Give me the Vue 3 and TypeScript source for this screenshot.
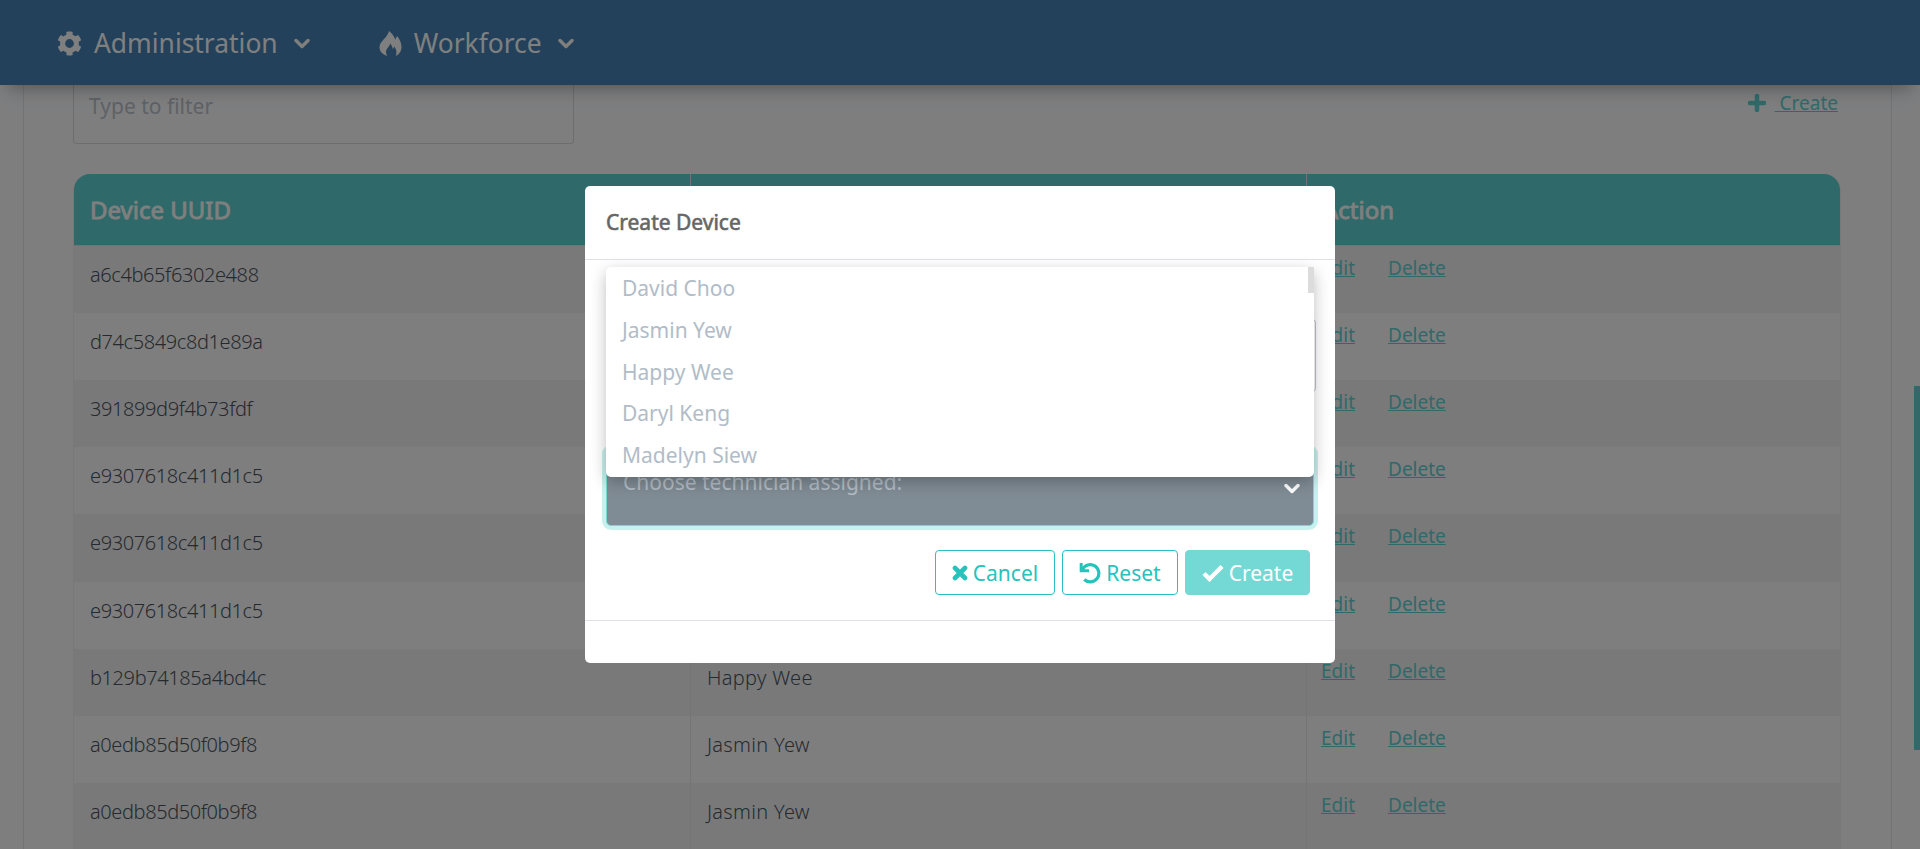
<script setup lang="ts">
interface DeviceRow {
  uuid: string
  technician: string
}

const rows: DeviceRow[] = [
  { uuid: 'a6c4b65f6302e488', technician: 'David Choo' },
  { uuid: 'd74c5849c8d1e89a', technician: 'Jasmin Yew' },
  { uuid: '391899d9f4b73fdf', technician: 'Happy Wee' },
  { uuid: 'e9307618c411d1c5', technician: 'Daryl Keng' },
  { uuid: 'e9307618c411d1c5', technician: 'Daryl Keng' },
  { uuid: 'e9307618c411d1c5', technician: 'Daryl Keng' },
  { uuid: 'b129b74185a4bd4c', technician: 'Happy Wee' },
  { uuid: 'a0edb85d50f0b9f8', technician: 'Jasmin Yew' },
  { uuid: 'a0edb85d50f0b9f8', technician: 'Jasmin Yew' },
]

const technicians: string[] = ['David Choo', 'Jasmin Yew', 'Happy Wee', 'Daryl Keng', 'Madelyn Siew']
</script>

<template>
  <div class="app">
    <header class="navbar">
      <div class="nav-item">
        <svg class="nav-icon cog" viewBox="0 0 512 512"><path d="M487.400 315.700l-42.600-24.600c4.300-23.200 4.300-47 0-70.200l42.600-24.600c4.900-2.800 7.100-8.600 5.500-14-11.100-35.600-30-67.800-54.700-94.600-3.800-4.100-10-5.100-14.800-2.300L380.800 110c-17.900-15.400-38.500-27.300-60.800-35.100V25.800c0-5.600-3.900-10.500-9.400-11.700-36.700-8.200-74.300-7.800-109.200 0-5.500 1.200-9.400 6.100-9.400 11.700V75c-22.200 7.900-42.800 19.800-60.800 35.100L88.700 85.500c-4.900-2.800-11-1.900-14.800 2.300-24.700 26.700-43.600 58.900-54.700 94.600-1.700 5.400.6 11.200 5.500 14L67.300 221c-4.300 23.200-4.300 47 0 70.200l-42.600 24.600c-4.900 2.800-7.100 8.600-5.500 14 11.100 35.600 30 67.800 54.700 94.600 3.800 4.100 10 5.100 14.800 2.300l42.600-24.600c17.900 15.400 38.500 27.300 60.800 35.100v49.200c0 5.600 3.900 10.500 9.400 11.700 36.700 8.200 74.300 7.800 109.200 0 5.500-1.200 9.400-6.100 9.400-11.700v-49.200c22.200-7.900 42.800-19.800 60.800-35.100l42.600 24.600c4.900 2.800 11 1.900 14.800-2.300 24.700-26.700 43.600-58.900 54.700-94.600 1.500-5.500-.7-11.300-5.600-14.100zM256 346a90 90 0 1 1 0-180 90 90 0 1 1 0 180z"/></svg>
        <span class="nav-label">Administration</span>
        <svg class="nav-caret" viewBox="0 0 16 12"><path d="M2 2.500l6 6 6-6"/></svg>
      </div>
      <div class="nav-item">
        <svg class="nav-icon fire" viewBox="0 0 22 25"><path d="M9.500 0c3.200 2.400 5.300 5.300 6.300 8.700.5-1.400 1-2.500 1.900-3.600C20.500 8.500 22 12.500 22 16c0 4-2.300 7.200-5.700 9 1.200-3.400.8-6.400-1.600-9.400l-1.300 2.600c-.5-2.400-1.400-4.200-2.700-5.600-.7 3.200-4.200 5.100-4.200 8.400 0 1.500.4 2.800 1.200 4C2.800 23.300 0 20.300 0 16.200 0 10.200 8.300 6.500 9.500 0z"/></svg>
        <span class="nav-label">Workforce</span>
        <svg class="nav-caret" viewBox="0 0 16 12"><path d="M2 2.500l6 6 6-6"/></svg>
      </div>
    </header>

    <main class="page">
      <section class="panel">
        <div class="toolbar">
          <div class="filter">Type to filter</div>
          <a class="create-link">
            <svg class="plus" viewBox="0 0 18 18"><path d="M9 2v14M2 9h14"/></svg>
            <span>&nbsp;Create</span>
          </a>
        </div>
        <div class="table">
          <div class="tr head">
            <div class="th">Device UUID</div>
            <div class="th">Technician</div>
            <div class="th">Action</div>
          </div>
          <div v-for="(row, i) in rows" :key="i" class="tr">
            <div class="td uuid">{{ row.uuid }}</div>
            <div class="td name">{{ row.technician }}</div>
            <div class="td actions"><a>Edit</a><a>Delete</a></div>
          </div>
        </div>
      </section>
      <div class="page-thumb"></div>
    </main>

    <div class="backdrop">
      <div class="modal">
        <div class="modal-header">Create Device</div>
        <div class="modal-body">
          <div class="field text-field"></div>
          <div class="field select">
            <span>Choose technician assigned:</span>
            <svg class="select-caret" viewBox="0 0 16 12"><path d="M2 2.500l6 6 6-6"/></svg>
            <div class="menu">
              <div class="options">
                <div v-for="name in technicians" :key="name" class="option">{{ name }}</div>
              </div>
              <div class="menu-thumb"></div>
            </div>
          </div>
          <div class="buttons">
            <button class="btn cancel">
              <svg width="16" height="16" viewBox="0 0 16 16"><path d="M3 3l10 10M13 3L3 13" stroke-width="4.600" stroke-linecap="round"/></svg>Cancel
            </button>
            <button class="btn reset">
              <svg width="22" height="22" viewBox="0 0 22 22"><path d="M3.500 7.500A8.600 8.600 0 1 1 5.300 17.500" stroke-width="3.200"/><path d="M2.200 1v7.700h7.800" stroke-width="3"/></svg>Reset
            </button>
            <button class="btn create">
              <svg width="22" height="18" viewBox="0 0 22 18"><path d="M2 9.500l5.500 5.500L20 2.500" stroke-width="4.400"/></svg>Create
            </button>
          </div>
        </div>
        <div class="modal-footer"></div>
      </div>
    </div>
  </div>
</template>

<style>
body {
  margin: 0;
  overflow: hidden;
}
</style>

<style scoped>
.app {
  position: relative;
  height: 849px;
  overflow: hidden;
  background: #fcfdff;
  font-family: "Noto Sans", sans-serif;
  color: #4c555e;
  display: flex;
  flex-direction: column;
}
.app * {
  box-sizing: border-box;
}
.navbar {
  position: relative;
  z-index: 1;
  flex: none;
  height: 85px;
  background: #4682b4;
  box-shadow: 0 10px 18px -8px rgba(0, 0, 0, 0.36);
  display: flex;
  align-items: center;
  padding-left: 57px;
  gap: 69px;
  color: #fff;
}
.nav-item {
  display: flex;
  align-items: center;
  font-size: 26.4px;
}
.nav-icon {
  fill: #fff;
  width: 25px;
  height: 25px;
  margin-top: 2px;
}
.nav-icon.fire {
  width: 23px;
}
.nav-label {
  margin: 0 16px 0 12px;
}
.nav-caret,
.select-caret {
  width: 16px;
  height: 12px;
  fill: none;
  stroke: #fff;
  stroke-width: 3.400;
  stroke-linecap: round;
  stroke-linejoin: round;
}
.nav-caret {
  margin-top: 3px;
}
.page {
  flex: none;
  height: 764px;
  display: flex;
  padding: 0 0 0 23px;
}
.panel {
  width: 1869px;
  border: solid #e6e7e9;
  border-width: 0 1px;
  padding: 0 50px 0 49px;
}
.toolbar {
  display: flex;
  justify-content: space-between;
  height: 89px;
}
.filter {
  width: 501px;
  height: 59px;
  border: 1px solid #dadbdd;
  border-top: 0;
  border-radius: 0 0 4px 4px;
  padding: 6px 15px;
  font-size: 21px;
  line-height: 30px;
  color: #bcc4cc;
}
.create-link {
  display: flex;
  height: 36px;
  align-items: center;
  gap: 9px;
  padding-right: 3px;
  font-size: 19px;
  color: #61d3d2;
}
.create-link span {
  text-decoration: underline;
}
.plus {
  width: 18px;
  height: 18px;
  stroke: #61d3d2;
  stroke-width: 4.500;
  stroke-linecap: round;
}
.table {
  border: solid #f0f1f2;
  border-width: 0 1px;
  border-radius: 17px 17px 0 0;
}
.tr {
  display: grid;
  grid-template-columns: 616px 616px 1fr;
  height: 67.2px;
}
.tr:nth-child(even) {
  background: #f2f3f5;
}
.tr.head {
  height: 71.600px;
  background: #61d3d2;
  border-radius: 16px 16px 0 0;
  border-bottom: 1px solid #e4e6e8;
}
.th {
  padding: 18px 16px 0;
  font-size: 24px;
  line-height: 36px;
  color: #fff;
  -webkit-text-stroke: 0.8px #fff;
}
.th + .th {
  border-left: 1px solid #dfe6e8;
}
.td {
  padding: 14px 16px 0;
  font-size: 20px;
  line-height: 30px;
  font-weight: 300;
}
.td.uuid {
  letter-spacing: -0.4px;
}
.td.name {
  letter-spacing: 0.3px;
}
.td + .td {
  border-left: 1px solid #e9eaec;
}
.td.actions {
  display: flex;
  gap: 33px;
  padding: 8px 14px;
  line-height: 28px;
  font-size: 19px;
  font-weight: 400;
  color: #61d3d2;
  text-decoration: underline;
}
.page-thumb {
  width: 6px;
  height: 364px;
  margin: 301px 0 0 auto;
  background: #61d3d2;
}
.backdrop {
  position: absolute;
  z-index: 2;
  inset: 0;
  background: rgba(0, 0, 0, 0.5);
  display: flex;
  justify-content: center;
  align-items: flex-start;
  padding-top: 186px;
}
.modal {
  width: 750px;
  height: 477px;
  background: #fff;
  border-radius: 5px;
  display: flex;
  flex-direction: column;
}
.modal-header {
  height: 74px;
  border-bottom: 1px solid #dee2e6;
  padding: 20px 21px;
  font-size: 21px;
  line-height: 32px;
  color: #666;
  -webkit-text-stroke: 0.6px #666;
}
.modal-body {
  flex: 1;
  padding: 58px 19px 0 21px;
}
.field {
  height: 75px;
  border: 1px solid #bfc2ca;
  border-radius: 5px;
}
.select {
  position: relative;
  width: 708px;
  height: 77px;
  margin-top: 56px;
  border-color: #74d9d4;
  background: #808c95;
  box-shadow: 0 0 0 4px #c8f0ee;
  padding: 16px;
  font-size: 21px;
  line-height: 32px;
  color: #b4bdc6;
}
.select-caret {
  position: absolute;
  right: 13px;
  top: 33px;
}
.menu {
  position: absolute;
  left: -1px;
  bottom: 48px;
  width: 708px;
  height: 210px;
  background: #fff;
  border-radius: 5px;
  box-shadow: 0 5px 16px rgba(0, 0, 0, 0.26);
  display: flex;
  justify-content: space-between;
}
.option {
  height: 41.800px;
  padding-left: 16px;
  line-height: 43px;
  color: #b1bcc7;
}
.menu-thumb {
  width: 6px;
  height: 26px;
  background: #dcdcdc;
}
.buttons {
  display: flex;
  justify-content: flex-end;
  gap: 7px;
  margin: 24px 6px 0 0;
}
.btn {
  height: 45px;
  padding: 0;
  border: 1px solid #26c2bb;
  border-radius: 4px;
  background: #fff;
  color: #26c2bb;
  font: 400 21px "Noto Sans", sans-serif;
  display: flex;
  align-items: center;
  justify-content: center;
  gap: 5px;
}
.btn svg {
  fill: none;
  stroke: currentColor;
}
.cancel {
  width: 120px;
}
.reset {
  width: 116px;
}
.create {
  width: 125px;
  border-color: #74d9d4;
  background: #74d9d4;
  color: #fff;
}
.modal-footer {
  height: 43px;
  border-top: 1px solid #dee2e6;
}
</style>
